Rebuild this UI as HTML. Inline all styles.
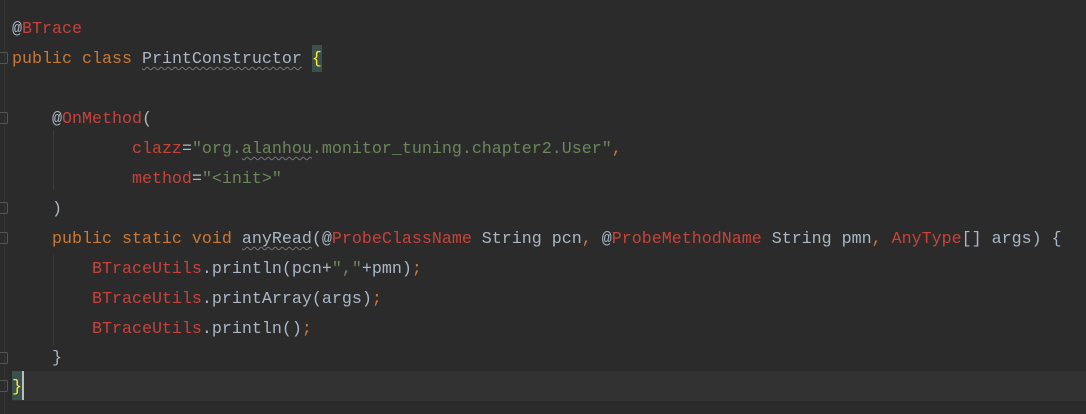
<!DOCTYPE html>
<html><head><meta charset="utf-8"><style>
html,body{margin:0;padding:0;width:1086px;height:414px;overflow:hidden;background:#2b2b2b;}
.l{position:absolute;left:12px;height:30px;line-height:30px;font-family:"Liberation Mono",monospace;font-size:16.67px;color:#a9b7c6;white-space:pre;}
.k{color:#cc7832}.r{color:#c8423a}.s{color:#6a8759}
.u{text-decoration:underline wavy #777;text-decoration-thickness:1px;text-underline-offset:3px}
.cur{position:absolute;left:12px;right:0;top:371px;height:30px;background:#323232}
.g{position:absolute;width:1px;background:#3b3b3b}
.f{position:absolute;left:0;width:7px;height:10px;border:1px solid #555;border-left:none;border-radius:0 2px 2px 0}
</style></head><body>
<div class="cur"></div>
<div style="position:absolute;left:12px;top:371px;width:10px;height:29px;background:#3b514d"></div>
<div style="position:absolute;left:22px;top:371px;width:2px;height:29px;background:#bbb"></div>
<div style="position:absolute;left:312px;top:45px;width:10px;height:27px;background:#3b514d"></div>
<div class="g" style="left:4px;top:0;height:414px;background:#353535"></div>
<div class="g" style="left:53px;top:130px;height:60px"></div>
<div class="g" style="left:53px;top:255px;height:90px;"></div>
<div class="f" style="top:52px"></div><div class="f" style="top:112px"></div>
<div class="f" style="top:202px"></div><div class="f" style="top:232px"></div>
<div class="f" style="top:352px"></div><div class="f" style="top:380px"></div>
<div class="l" style="top:15px">@<span class="r">BTrace</span></div>
<div class="l" style="top:45px"><span class="k">public class </span><span class="u">PrintConstructor</span> <span style="color:#ffef28">{</span></div>
<div class="l" style="top:105px">    @<span class="r">OnMethod</span>(</div>
<div class="l" style="top:135px">            <span class="r">clazz</span>=<span class="s">"org.<span class="u">alanhou</span>.monitor_tuning.chapter2.User"</span><span class="k">,</span></div>
<div class="l" style="top:165px">            <span class="r">method</span>=<span class="s">"&lt;init&gt;"</span></div>
<div class="l" style="top:195px">    )</div>
<div class="l" style="top:225px">    <span class="k">public static void </span><span class="u">anyRead</span>(@<span class="r">ProbeClassName</span> String pcn<span class="k">, </span>@<span class="r">ProbeMethodName</span> String pmn<span class="k">, </span><span class="r">AnyType</span>[] args) {</div>
<div class="l" style="top:255px">        <span class="r">BTraceUtils</span>.println(pcn+<span class="s">","</span>+pmn)<span class="k">;</span></div>
<div class="l" style="top:285px">        <span class="r">BTraceUtils</span>.printArray(args)<span class="k">;</span></div>
<div class="l" style="top:315px">        <span class="r">BTraceUtils</span>.println()<span class="k">;</span></div>
<div class="l" style="top:344px">    }</div>
<div class="l" style="top:373px"><span style="color:#ffef28">}</span></div>
</body></html>
